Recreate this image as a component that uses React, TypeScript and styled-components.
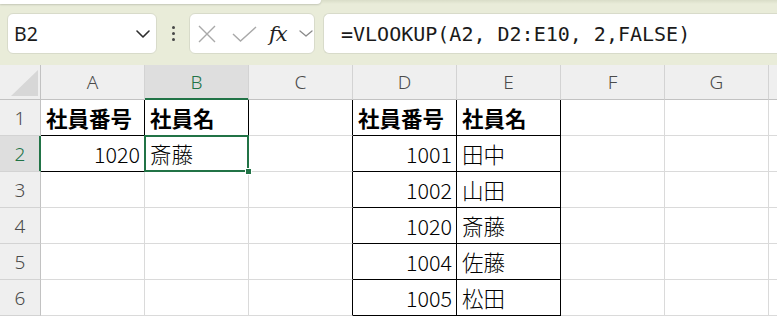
import React from "react";
import styled, { createGlobalStyle } from "styled-components";

const GREEN = "#217346";
const GRID = "#dadada";
const HEAD_LINE = "#c2c2c2";
const INK = "#000000";

const GlobalStyle = createGlobalStyle`
  html, body { margin: 0; padding: 0; }
  body { background: #e9ecd9; overflow: hidden; }
  #root { width: 777px; height: 316px; }
`;

const Window = styled.div`
  width: 777px;
  height: 316px;
  overflow: hidden;
  display: flex;
  flex-direction: column;
  background: #e9ecd9;
  font-family: "Noto Sans", "Liberation Sans", sans-serif;
`;

const TopStrip = styled.div`
  height: 4px;
  flex: none;
  display: flex;
  background: linear-gradient(#d9ddc8, #e9ecd9);
`;

const RibbonEdge = styled.div`
  width: 321px;
  background: #ffffff;
  border-bottom-right-radius: 5px;
  box-shadow: 0 1px 2px rgba(0, 0, 0, 0.16);
`;

const FormulaBar = styled.div`
  flex: none;
  height: 61px;
  box-sizing: border-box;
  padding: 9px 0 11px 7px;
  display: flex;
  align-items: stretch;
`;

const Field = styled.div`
  background: #ffffff;
  border: 1px solid #d8dbca;
  box-sizing: border-box;
  display: flex;
  align-items: center;
`;

const NameBox = styled(Field)`
  width: 150px;
  border-radius: 6px;
  padding: 0 6px 0 6px;
  justify-content: space-between;
  font-size: 19.5px;
  color: #1a1a1a;
`;

const DragHandle = styled.div`
  width: 32px;
  display: flex;
  flex-direction: column;
  align-items: center;
  justify-content: center;
  gap: 3px;
`;

const Dot = styled.span`
  width: 3px;
  height: 3px;
  border-radius: 50%;
  background: #474747;
`;

const FunctionBox = styled(Field)`
  width: 126px;
  border-radius: 6px;
  padding-left: 7px;
`;

const IconSlot = styled.span<{ $gap: number }>`
  display: flex;
  align-items: center;
  margin-left: ${(p) => p.$gap}px;
`;

const Fx = styled.span`
  font-family: "DejaVu Serif", "Liberation Serif", serif;
  font-style: italic;
  font-size: 21px;
  line-height: 1;
  color: #222222;
  width: 25px;
  letter-spacing: -1px;
  margin-top: 1px;
`;

const FormulaInput = styled(Field)`
  flex: 1;
  margin-left: 8px;
  border-right: none;
  border-radius: 6px 0 0 6px;
  padding-left: 17px;
  font-family: "DejaVu Sans Mono", "Liberation Mono", monospace;
  font-size: 20px;
  color: #1a1a1a;
  white-space: nowrap;
`;

const Sheet = styled.div`
  flex: 1;
  display: grid;
  grid-template-columns: 41px repeat(7, 104px) 1fr;
  grid-template-rows: 35px;
  grid-auto-rows: 36px;
  background: #ffffff;
`;

const Corner = styled.div`
  box-sizing: border-box;
  background: #efefef;
  border-right: 1px solid ${HEAD_LINE};
  border-bottom: 1px solid ${HEAD_LINE};
  display: flex;
  align-items: flex-end;
  justify-content: flex-end;
  padding: 0 2px 3px 0;
`;

const ColHead = styled.div<{ $active?: boolean }>`
  box-sizing: border-box;
  background: ${(p) => (p.$active ? "#dedede" : "#efefef")};
  border-right: 1px solid #d3d3d3;
  border-bottom: 1px solid ${(p) => (p.$active ? GREEN : HEAD_LINE)};
  box-shadow: ${(p) => (p.$active ? `inset 0 -1px 0 ${GREEN}` : "none")};
  display: flex;
  align-items: center;
  justify-content: center;
  font-size: 19px;
  font-weight: 300;
  color: ${(p) => (p.$active ? GREEN : "#4a4a4a")};
`;

const RowHead = styled.div<{ $active?: boolean }>`
  box-sizing: border-box;
  background: ${(p) => (p.$active ? "#dedede" : "#efefef")};
  border-right: 1px solid ${(p) => (p.$active ? GREEN : HEAD_LINE)};
  border-bottom: 1px solid #d3d3d3;
  box-shadow: ${(p) => (p.$active ? `inset -1px 0 0 ${GREEN}` : "none")};
  display: flex;
  align-items: center;
  justify-content: center;
  font-size: 19px;
  font-weight: 300;
  color: ${(p) => (p.$active ? GREEN : "#4a4a4a")};
`;

const Cell = styled.div<{ $right?: boolean; $bold?: boolean; $rb: string; $bb: string; $active?: boolean }>`
  position: ${(p) => (p.$active ? "relative" : "static")};
  box-sizing: border-box;
  min-width: 0;
  border-right: 1px solid ${(p) => p.$rb};
  border-bottom: 1px solid ${(p) => p.$bb};
  display: flex;
  align-items: center;
  justify-content: ${(p) => (p.$right ? "flex-end" : "flex-start")};
  padding: 0 4px 0 5px;
  font-family: "Noto Sans CJK JP", "Noto Sans", sans-serif;
  font-size: 21.5px;
  font-weight: ${(p) => (p.$bold ? 700 : 300)};
  color: ${INK};
  white-space: nowrap;
  overflow: visible;
`;

const Selection = styled.div`
  position: absolute;
  left: -1px;
  top: -1px;
  width: 105px;
  height: 37px;
  box-sizing: border-box;
  border: 2px solid ${GREEN};
  pointer-events: none;
  z-index: 2;
`;

const FillHandle = styled.div`
  position: absolute;
  right: -5px;
  bottom: -5px;
  width: 7px;
  height: 7px;
  box-sizing: border-box;
  background: ${GREEN};
  border: 1px solid #ffffff;
`;

const COLS = ["A", "B", "C", "D", "E", "F", "G", ""];
const ROWS = [1, 2, 3, 4, 5, 6];

type CellData = { text: string; bold?: boolean; right?: boolean };

const DATA: Record<string, CellData> = {
  A1: { text: "社員番号", bold: true },
  B1: { text: "社員名", bold: true },
  D1: { text: "社員番号", bold: true },
  E1: { text: "社員名", bold: true },
  A2: { text: "1020", right: true },
  B2: { text: "斎藤" },
  D2: { text: "1001", right: true },
  E2: { text: "田中" },
  D3: { text: "1002", right: true },
  E3: { text: "山田" },
  D4: { text: "1020", right: true },
  E4: { text: "斎藤" },
  D5: { text: "1004", right: true },
  E5: { text: "佐藤" },
  D6: { text: "1005", right: true },
  E6: { text: "松田" },
};

const bordered = (c: number, r: number) =>
  (c >= 0 && c <= 1 && r >= 1 && r <= 2) || (c >= 3 && c <= 4 && r >= 1);

const ACTIVE_COL = 1;
const ACTIVE_ROW = 2;

const Chevron = ({ w, h, color, sw }: { w: number; h: number; color: string; sw: number }) => (
  <svg width={w} height={h} viewBox={`0 0 ${w} ${h}`} fill="none">
    <polyline
      points={`1,1 ${w / 2},${h - 1} ${w - 1},1`}
      stroke={color}
      strokeWidth={sw}
      strokeLinecap="round"
      strokeLinejoin="round"
    />
  </svg>
);

export default function App() {
  return (
    <>
      <GlobalStyle />
      <Window>
        <TopStrip>
          <RibbonEdge />
        </TopStrip>
        <FormulaBar>
          <NameBox>
            <span>B2</span>
            <Chevron w={14} h={8} color="#2e2e2e" sw={1.6} />
          </NameBox>
          <DragHandle>
            <Dot />
            <Dot />
            <Dot />
          </DragHandle>
          <FunctionBox>
            <IconSlot $gap={1}>
              <svg width="18" height="18" viewBox="0 0 18 18" fill="none">
                <path d="M1 1 L17 17 M17 1 L1 17" stroke="#a9a9a9" strokeWidth="1.4" />
              </svg>
            </IconSlot>
            <IconSlot $gap={16}>
              <svg width="25" height="16" viewBox="0 0 25 16" fill="none">
                <polyline points="1,8 8.5,15 24,1" stroke="#a9a9a9" strokeWidth="1.4" />
              </svg>
            </IconSlot>
            <IconSlot $gap={12}>
              <Fx>fx</Fx>
            </IconSlot>
            <IconSlot $gap={5}>
              <Chevron w={14} h={7} color="#8a8a8a" sw={1.3} />
            </IconSlot>
          </FunctionBox>
          <FormulaInput>=VLOOKUP(A2, D2:E10, 2,FALSE)</FormulaInput>
        </FormulaBar>
        <Sheet>
          <Corner>
            <svg width="27" height="26" viewBox="0 0 27 26">
              <polygon points="27,0 27,26 0,26" fill="#d7d7d7" />
            </svg>
          </Corner>
          {COLS.map((c, i) => (
            <ColHead key={`h${i}`} $active={i === ACTIVE_COL}>
              {c}
            </ColHead>
          ))}
          {ROWS.map((r) => (
            <React.Fragment key={`r${r}`}>
              <RowHead $active={r === ACTIVE_ROW}>{r}</RowHead>
              {COLS.map((c, ci) => {
                const d = DATA[`${c}${r}`];
                const rb = bordered(ci, r) || bordered(ci + 1, r) ? INK : GRID;
                const bb = bordered(ci, r) || bordered(ci, r + 1) ? INK : GRID;
                const active = ci === ACTIVE_COL && r === ACTIVE_ROW;
                return (
                  <Cell
                    key={`c${ci}-${r}`}
                    $rb={rb}
                    $bb={bb}
                    $bold={d?.bold}
                    $right={d?.right}
                    $active={active}
                  >
                    {d?.text}
                    {active && (
                      <Selection>
                        <FillHandle />
                      </Selection>
                    )}
                  </Cell>
                );
              })}
            </React.Fragment>
          ))}
        </Sheet>
      </Window>
    </>
  );
}
